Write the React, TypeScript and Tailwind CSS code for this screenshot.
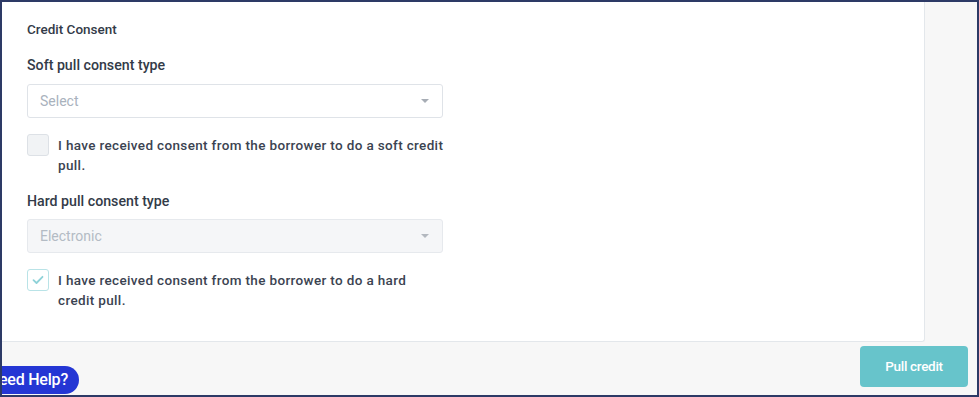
export default function App() {
  return (
    <div
      className="relative w-[979px] h-[397px] overflow-hidden border-2 border-[#2d3a66] bg-[#f7f7f7] flex flex-col"
      style={{ fontFamily: 'Roboto, "Liberation Sans", sans-serif' }}
    >
      {/* Main card + side gutter */}
      <div className="flex h-[340px]">
        <div className="w-[923px] bg-white border-r border-b border-[#e3e7eb] rounded-br-[3px] pl-[25px] pt-[18px]">
          <h3 className="text-[13.5px] font-medium text-[#333b48] leading-[18px]">Credit Consent</h3>

          {/* Soft pull */}
          <label className="block mt-[18px] text-[14.2px] font-medium text-[#333b48] leading-[18px]">
            Soft pull consent type
          </label>
          <div className="mt-[10px] w-[416px] h-[34px] border border-[#dfe3e8] rounded-[3px] bg-white flex items-center justify-between pl-[12px] pr-[13px]">
            <span className="text-[14px] text-[#a9b2bd]">Select</span>
            <span className="w-0 h-0 border-l-[4px] border-r-[4px] border-t-[4px] border-l-transparent border-r-transparent border-t-[#a7adb5]" />
          </div>
          <div className="mt-[16px] flex items-start gap-[9px]">
            <div className="w-[22px] h-[22px] shrink-0 rounded-[3px] bg-[#f1f3f5] border border-[#dde1e6]" />
            <p className="w-[395px] text-[13.5px] font-medium tracking-[0.35px] text-[#3b4351] leading-[20px] pt-[1px]">
              I have received consent from the borrower to do a soft credit pull.
            </p>
          </div>

          {/* Hard pull */}
          <label className="block mt-[17px] text-[14.2px] font-medium text-[#333b48] leading-[18px]">
            Hard pull consent type
          </label>
          <div className="mt-[9px] w-[416px] h-[34px] border border-[#e6e9ed] rounded-[3px] bg-[#f5f6f8] flex items-center justify-between pl-[12px] pr-[13px]">
            <span className="text-[14px] text-[#b3bbc4]">Electronic</span>
            <span className="w-0 h-0 border-l-[4px] border-r-[4px] border-t-[4px] border-l-transparent border-r-transparent border-t-[#b3b8bf]" />
          </div>
          <div className="mt-[16px] flex items-start gap-[9px]">
            <div className="w-[22px] h-[22px] shrink-0 rounded-[3px] bg-white border border-[#b9e3e7] flex items-center justify-center">
              <svg width="12" height="10" viewBox="0 0 12 10" fill="none">
                <path d="M1.5 5.2 4.5 8 10.5 1.8" stroke="#8fd2d8" strokeWidth="1.8" strokeLinecap="round" strokeLinejoin="round" />
              </svg>
            </div>
            <p className="w-[370px] text-[13.5px] font-medium tracking-[0.35px] text-[#3b4351] leading-[20px] pt-[1px]">
              I have received consent from the borrower to do a hard credit pull.
            </p>
          </div>
        </div>
        <div className="flex-1" />
      </div>

      {/* Footer */}
      <div className="flex-1 flex justify-end items-start pt-[4px] pr-[9px]">
        <button className="w-[108px] h-[41px] rounded-[4px] bg-[#67c4cb] text-white text-[13.5px] font-medium tracking-[-0.3px]">
          Pull credit
        </button>
      </div>

      {/* Need help pill */}
      <div className="absolute left-[-22px] bottom-[1px] h-[28px] w-[99px] rounded-full bg-[#2436d4] text-white text-[16px] font-medium tracking-[-0.2px] flex items-center justify-end pr-[11px]">
        Need Help?
      </div>
    </div>
  );
}
